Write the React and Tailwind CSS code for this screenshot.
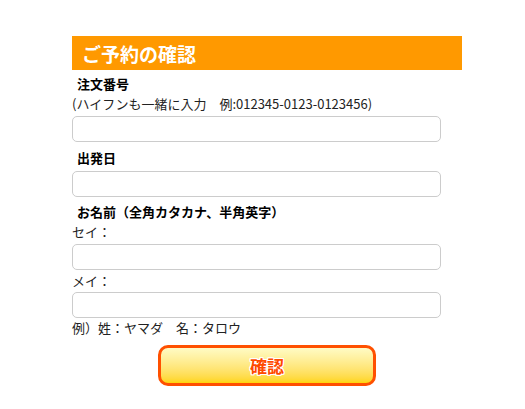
export default function App() {
  const font = { fontFamily: '"Noto Sans CJK JP", "Noto Sans", sans-serif' };
  return (
    <div className="w-[525px] h-[409px] bg-white" style={font}>
      <div className="ml-[72px] pt-[36px] flex flex-col text-[13px] text-[#222]">
        <div className="w-[390px] h-[34px] bg-[#ff9900] flex items-center pl-[10px] text-white text-[19px] font-bold leading-none">
          ご予約の確認
        </div>
        <div className="mt-[4px] h-[20px] leading-[20px] pl-[5px] font-bold text-black">注文番号</div>
        <div className="h-[20px] leading-[20px]">(ハイフンも一緒に入力　例:012345-0123-0123456)</div>
        <input className="mt-[2px] w-[369px] h-[26px] border border-[#cccccc] rounded-[5px] bg-white outline-none" />
        <div className="mt-[6px] h-[20px] leading-[20px] pl-[5px] font-bold text-black">出発日</div>
        <input className="mt-[3px] w-[369px] h-[26px] border border-[#cccccc] rounded-[5px] bg-white outline-none" />
        <div className="mt-[5px] h-[20px] leading-[20px] pl-[5px] font-bold text-black">お名前（全角カタカナ、半角英字）</div>
        <div className="h-[20px] leading-[20px]">セイ：</div>
        <input className="mt-[2px] w-[369px] h-[26px] border border-[#cccccc] rounded-[5px] bg-white outline-none" />
        <div className="mt-[1px] h-[20px] leading-[20px]">メイ：</div>
        <input className="mt-[1px] w-[369px] h-[26px] border border-[#cccccc] rounded-[5px] bg-white outline-none" />
        <div className="h-[20px] leading-[20px]">例）姓：ヤマダ　名：タロウ</div>
        <button className="mt-[7px] ml-[86px] w-[218px] h-[41px] border-[3px] border-[#ff5000] rounded-[10px] bg-gradient-to-b from-[#fffbc4] to-[#ffd500] flex items-center justify-center text-[17px] font-bold text-[#ff4a00] [text-shadow:1px_1px_0_#fff,-1px_-1px_0_#fff,1px_-1px_0_#fff,-1px_1px_0_#fff,0_1px_0_#fff,0_-1px_0_#fff,1px_0_0_#fff,-1px_0_0_#fff]">
          確認
        </button>
      </div>
    </div>
  );
}
